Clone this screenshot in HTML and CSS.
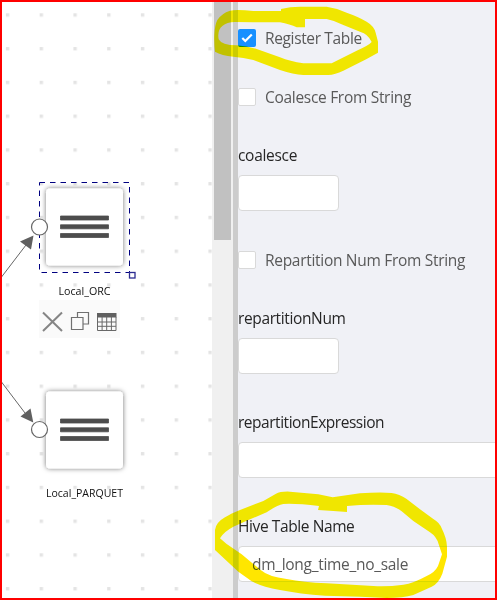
FILE: index.html
```
<!DOCTYPE html>
<html lang="en">
<head>
<meta charset="utf-8">
<title>Pipeline editor</title>
<link rel="stylesheet" href="styles.css">
</head>
<body>
<div class="app">
  <main class="canvas">
    <svg class="diagram" width="212" height="600" viewBox="0 0 212 600">
      <defs>
        <pattern id="grid" x="5.9" y="13.3" width="33.75" height="33.75" patternUnits="userSpaceOnUse">
          <rect width="3.4" height="3.4" fill="#e4e4e4"/>
        </pattern>
        <filter id="shadow" x="-20%" y="-20%" width="140%" height="140%">
          <feDropShadow dx="0" dy="0" stdDeviation="2.5" flood-color="#000" flood-opacity=".55"/>
        </filter>
        <g id="node">
          <rect width="77" height="77" rx="4" fill="#fff" filter="url(#shadow)"/>
          <path d="M14.500 27.500h48v4h-48zM14.500 36.300h48v4h-48zM14.500 45h48v4h-48z" fill="#4d4d4d" stroke="#4d4d4d" stroke-width=".8" stroke-linejoin="round"/>
        </g>
      </defs>
      <rect width="212" height="600" fill="url(#grid)"/>
      <path d="M0 279L26 245M0 380L25 413" stroke="#666" fill="none"/>
      <path d="M33.500 235.500L20 241.500L31 249.500zM33.300 422.500L20.500 416.500L30.500 408.500z" fill="#606060"/>
      <use href="#node" x="46" y="188.500"/>
      <use href="#node" x="46" y="391.500"/>
      <rect x="39.500" y="182.500" width="90" height="90" fill="none" stroke="#000080" stroke-dasharray="5.500 5"/>
      <rect x="129.500" y="272.500" width="5.500" height="5.500" fill="#fff" stroke="#2c2c91" stroke-width="1.300"/>
      <circle cx="39.500" cy="227" r="8" fill="#fff" stroke="#666" stroke-width="1.200"/>
      <circle cx="39.500" cy="429.500" r="8" fill="#fff" stroke="#666" stroke-width="1.200"/>
      <rect x="39" y="300" width="81" height="38" fill="#fafafa"/>
      <path d="M43 312.500L62 331M62 312.500L43 331" stroke="#858585" stroke-width="2" fill="none"/>
      <path d="M71.500 317.500h11.500v12h-11.500zM77.500 317v-4.500h11v11.500h-5" stroke="#707070" fill="none" stroke-width="1.200"/>
      <path d="M97 313h19.500v4.500h-19.500z" fill="#606060"/>
      <path d="M97.500 317v13.500h18.500v-13.500M97.500 322h18.500M97.500 326.300h18.500M102.100 317v13.500M106.700 317v13.500M111.400 317v13.500" stroke="#686868" fill="none"/>
      <text class="node-label" x="58.500" y="295" textLength="52" lengthAdjust="spacingAndGlyphs">Local_ORC</text>
      <text class="node-label" x="46" y="497" textLength="77" lengthAdjust="spacingAndGlyphs">Local_PARQUET</text>
    </svg>
  </main>
  <div class="scrollbar"><div class="thumb"></div></div>
  <form class="panel">
    <label class="check"><span class="box checked"><svg width="18" height="18" viewBox="0 0 18 18"><path d="M4.300 9l3 3 6.500-6.500" fill="none" stroke="#fff" stroke-width="2.200"/></svg></span><span class="register">Register Table</span></label>
    <label class="check coalesce-check"><span class="box"></span><span class="from-string">Coalesce From String</span></label>
    <label class="field"><span class="name coalesce">coalesce</span><span class="input short"></span></label>
    <label class="check repartition-check"><span class="box"></span><span class="num-string">Repartition Num From String</span></label>
    <label class="field"><span class="name num">repartitionNum</span><span class="input short"></span></label>
    <label class="field expression"><span class="name expr">repartitionExpression</span><span class="input"></span></label>
    <label class="field hive"><span class="name hive-name">Hive Table Name</span><span class="input"><span class="value">dm_long_time_no_sale</span></span></label>
  </form>
</div>
<svg class="marker" width="497" height="600" viewBox="0 0 497 600">
  <g fill="#ffe600" fill-rule="evenodd">
    <path transform="translate(200 0) scale(.33333)" d="M45 155Q42 130 43 105Q44 76 52 60Q65 40 90 32Q110 28 160 33H243V27Q270 20 300 20H380Q410 24 440 38Q475 50 500 65Q522 78 527 98L534 125V158L500 177L430 212Q405 224 385 225H310Q280 223 240 210L160 180Q130 172 100 170Q65 167 45 155ZM56 118Q51 90 68 77Q80 67 105 66L160 67H240Q270 73 290 82H315V57H380Q405 62 430 75L480 95Q505 102 515 126Q505 137 470 152L395 190H310Q270 184 240 172L170 147Q140 138 110 136Q65 136 56 118Z"/>
    <path transform="translate(200 450) scale(.33333)" d="M45 300V240Q48 217 75 202Q90 192 120 180L190 153L228 131Q240 124 270 125L355 133L398 142L480 130Q540 126 575 129Q598 132 620 147L660 178L700 207Q719 218 725 235Q740 265 741 290V320L727 371Q716 400 695 410L640 435Q610 444 560 444L480 440L375 437Q300 432 240 420Q185 410 155 394L115 365ZM60 265Q70 246 100 230L145 210L200 187Q230 166 250 162Q290 160 357 168L354 180L400 183L441 186V168Q500 162 560 165Q585 168 605 184L640 213L690 247Q710 260 716 283L726 313L714 348Q705 367 680 378Q640 400 610 404Q560 411 520 408L380 400Q310 397 260 387Q205 380 182 360L125 313L80 282Z"/>
  </g>
</svg>
<div class="frame"></div>
</body>
</html>
```
FILE: styles.css
```
* { box-sizing: border-box; }
body { margin: 0; background: #fff; overflow: hidden; font-family: "Open Sans", "Noto Sans", sans-serif; }
.app { display: flex; width: 497px; height: 600px; }
.canvas { flex: 0 0 212px; }
.diagram { display: block; }
.node-label { font-size: 11.500px; fill: #111; }
.scrollbar { flex: 0 0 21px; background: #f0f0f0; padding-left: 2px; }
.thumb { width: 17px; height: 240px; background: #c1c1c1; }
.panel { flex: 1; border-left: 5px solid #ccc; background: #f0f1f6; padding-top: 25px; font-size: 15.500px; letter-spacing: -.3px; color: #595959; overflow: hidden; white-space: nowrap; }
.check { display: flex; align-items: center; gap: 9px; height: 26px; }
.box { width: 18px; height: 18px; border: 1px solid #d9d9d9; border-radius: 2px; background: #fff; flex: none; }
.box.checked { background: #1890ff; border: 0; }
.box svg { display: block; }
.register { letter-spacing: -.36px; }
.coalesce-check { margin-top: 33px; }
.field { display: flex; flex-direction: column; margin-top: 32px; }
.name { height: 26px; line-height: 26px; color: #262626; margin-bottom: 7px; }
.num { letter-spacing: -.37px; }
.expr { letter-spacing: -.47px; }
.hive-name { letter-spacing: -.4px; }
.input { display: flex; align-items: center; height: 36px; width: 270px; border: 1px solid #d9d9d9; border-radius: 4px; background: #fff; padding-left: 13px; }
.input.short { width: 101px; }
.repartition-check { margin-top: 36px; }
.expression, .hive { margin-top: 35px; }
.marker { position: absolute; inset: 0; mix-blend-mode: darken; pointer-events: none; }
.frame { position: absolute; left: 0; top: 0; width: 497px; height: 600px; border: 2px solid #f00; pointer-events: none; }
```
